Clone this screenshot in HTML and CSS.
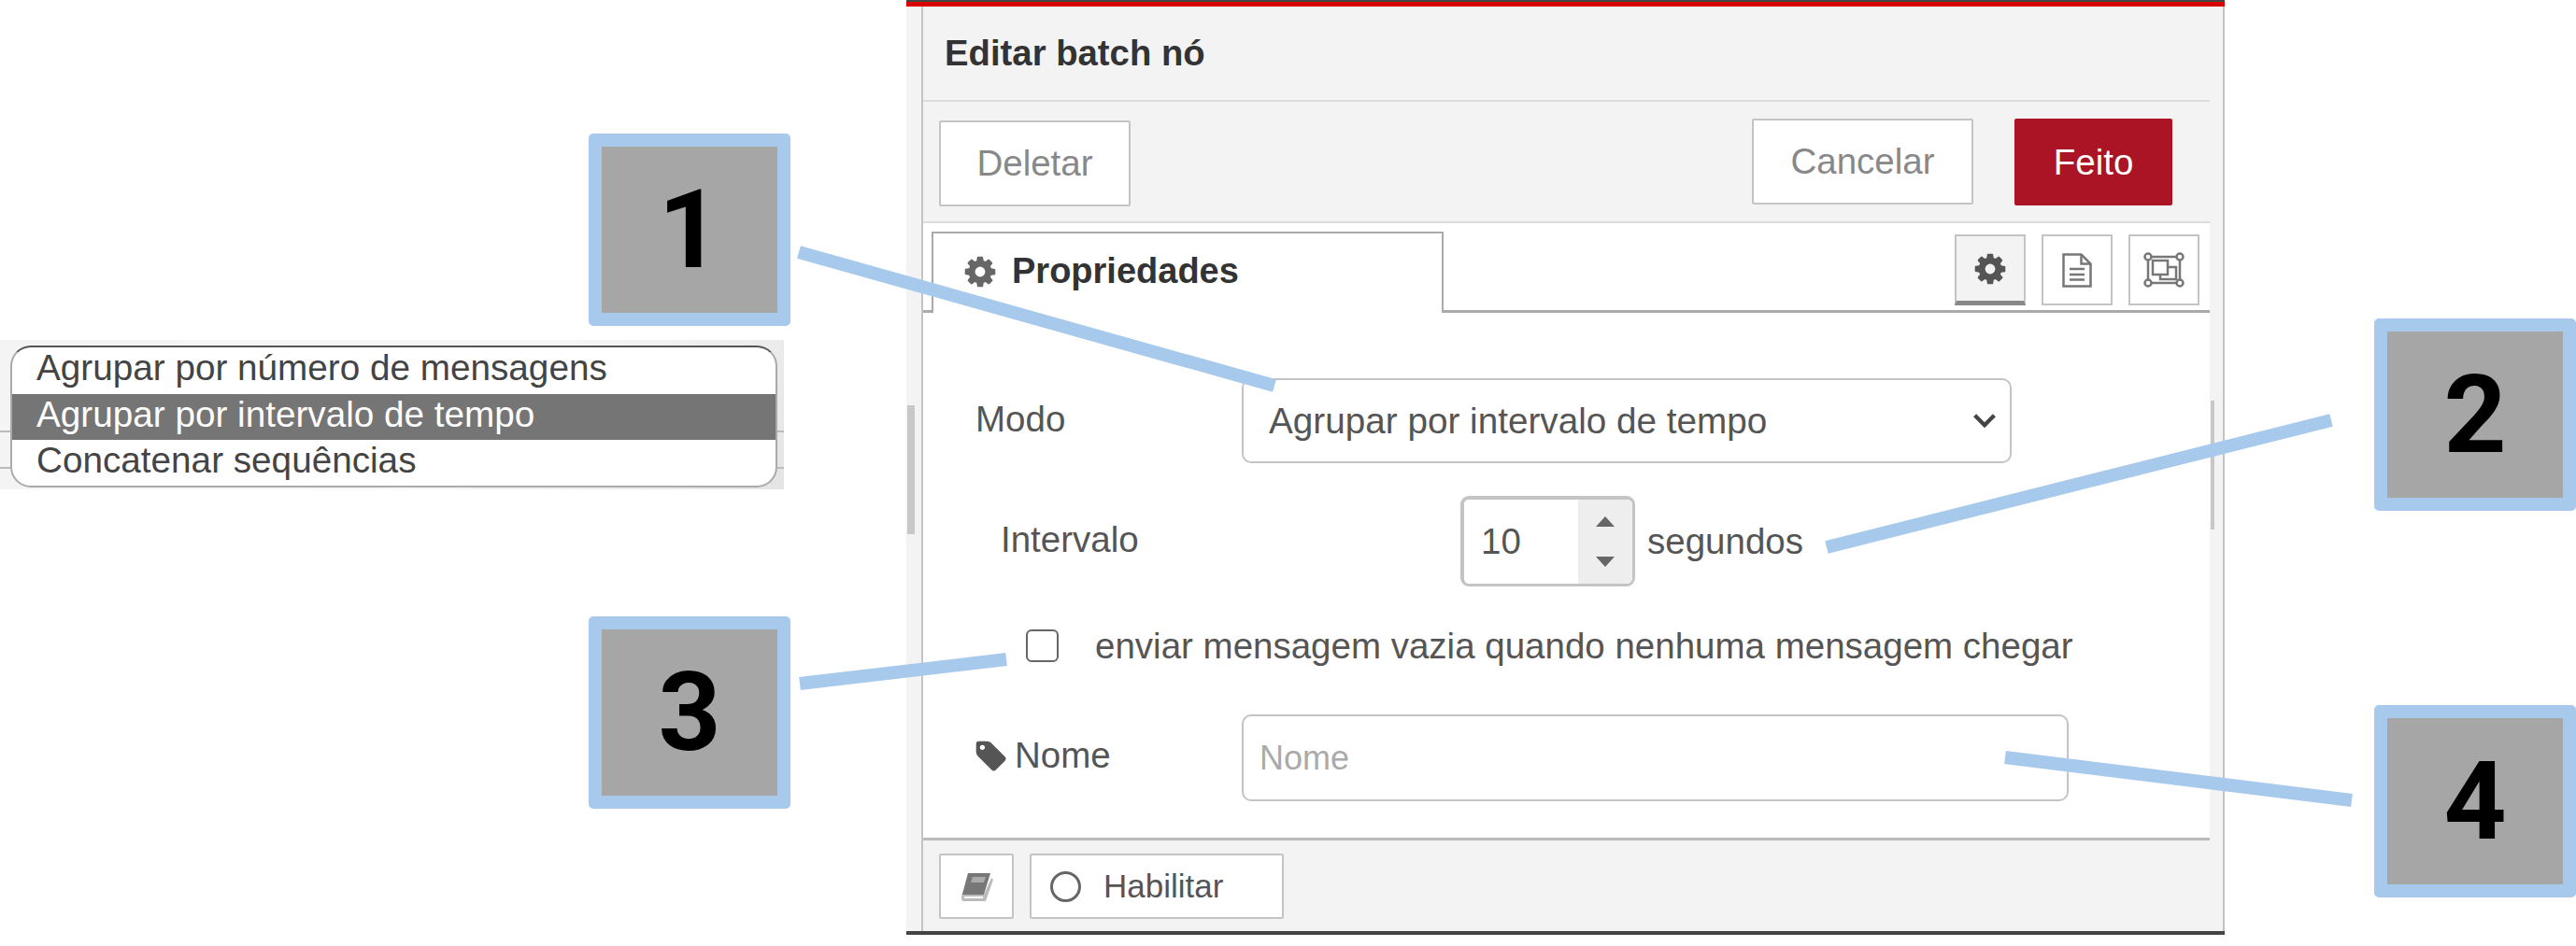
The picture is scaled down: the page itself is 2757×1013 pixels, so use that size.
FILE: index.html
```html
<!DOCTYPE html>
<html lang="pt-BR">
<head>
  <meta charset="UTF-8">
  <title>Editar batch nó</title>
  <link rel="stylesheet" href="styles.css">
</head>
<body>
  <div class="dropdown">
    <ul class="dropdown-list">
      <li>Agrupar por número de mensagens</li>
      <li class="selected">Agrupar por intervalo de tempo</li>
      <li>Concatenar sequências</li>
    </ul>
  </div>

  <div class="tray">
    <div class="gutter gutter-left"><span class="thumb"></span></div>
    <div class="tray-main">
      <div class="tray-header">Editar batch nó</div>
      <div class="tray-toolbar">
        <button class="btn btn-delete">Deletar</button>
        <button class="btn btn-cancel">Cancelar</button>
        <button class="btn btn-done">Feito</button>
      </div>
      <div class="tabs">
        <div class="tab">
          <svg class="tab-icon" viewBox="0 0 1792 1792"><path d="M1152 896q0-106-75-181t-181-75-181 75-75 181 75 181 181 75 181-75 75-181zm512-109v222q0 12-8 23t-20 13l-185 28q-19 54-39 91 35 50 107 138 10 12 10 25t-9 23q-27 37-99 108t-94 71q-12 0-26-9l-138-108q-44 23-91 38-16 136-29 186-7 28-36 28h-222q-14 0-24.500-8.500t-11.500-21.500l-28-184q-49-16-90-37l-141 107q-10 9-25 9-14 0-25-11-126-114-165-168-7-10-7-23 0-12 8-23 15-21 51-66.500t54-70.500q-27-50-41-99l-183-27q-13-2-21-12.500t-8-23.500v-222q0-12 8-23t19-13l186-28q14-46 39-92-40-57-107-138-10-12-10-24 0-10 9-23 26-36 98.500-107.500t94.500-71.500q13 0 26 10l138 107q44-23 91-38 16-136 29-186 7-28 36-28h222q14 0 24.500 8.500t11.500 21.500l28 184q49 16 90 37l142-107q9-9 24-9 13 0 25 10 129 119 165 170 7 8 7 22 0 12-8 23-15 21-51 66.500t-54 70.500q26 50 41 98l183 28q13 2 21 12.500t8 23.500z"/></svg>
          Propriedades
        </div>
        <div class="tab-buttons">
          <div class="tab-btn active">
            <svg class="gear" viewBox="0 0 1792 1792"><path d="M1152 896q0-106-75-181t-181-75-181 75-75 181 75 181 181 75 181-75 75-181zm512-109v222q0 12-8 23t-20 13l-185 28q-19 54-39 91 35 50 107 138 10 12 10 25t-9 23q-27 37-99 108t-94 71q-12 0-26-9l-138-108q-44 23-91 38-16 136-29 186-7 28-36 28h-222q-14 0-24.500-8.500t-11.500-21.500l-28-184q-49-16-90-37l-141 107q-10 9-25 9-14 0-25-11-126-114-165-168-7-10-7-23 0-12 8-23 15-21 51-66.500t54-70.500q-27-50-41-99l-183-27q-13-2-21-12.500t-8-23.500v-222q0-12 8-23t19-13l186-28q14-46 39-92-40-57-107-138-10-12-10-24 0-10 9-23 26-36 98.500-107.500t94.500-71.500q13 0 26 10l138 107q44-23 91-38 16-136 29-186 7-28 36-28h222q14 0 24.500 8.500t11.500 21.500l28 184q49 16 90 37l142-107q9-9 24-9 13 0 25 10 129 119 165 170 7 8 7 22 0 12-8 23-15 21-51 66.500t-54 70.500q26 50 41 98l183 28q13 2 21 12.500t8 23.500z"/></svg>
          </div>
          <div class="tab-btn">
            <svg class="file" viewBox="0 0 32 37" fill="none" stroke="#777" stroke-width="2.500"><path d="M1.500 1.500h19l10 10v24h-29z"/><path d="M20.500 1.500v10h10"/><path d="M8 17h16M8 23h16M8 28.500h16"/></svg>
          </div>
          <div class="tab-btn">
            <svg class="frame" viewBox="0 0 44 38" fill="none" stroke="#777" stroke-width="2.500"><path d="M5 5h34M5 33h34M5 5v28M39 5v28"/><circle cx="5" cy="5" r="3.500" fill="#fff"/><circle cx="39" cy="5" r="3.500" fill="#fff"/><circle cx="5" cy="33" r="3.500" fill="#fff"/><circle cx="39" cy="33" r="3.500" fill="#fff"/><path d="M18 16h17v13H18z"/><path d="M10 9h16v15H10z" fill="#fff"/></svg>
          </div>
        </div>
      </div>

      <form class="form">
        <div class="row row-mode">
          <label class="row-label">Modo</label>
          <div class="select-wrap">
            <select class="select">
              <option>Agrupar por intervalo de tempo</option>
            </select>
            <svg class="chevron" viewBox="0 0 30 20" fill="none" stroke="#444" stroke-width="5"><path d="M3 4l12 12 12-12"/></svg>
          </div>
        </div>
        <div class="row row-interval">
          <label class="row-label">Intervalo</label>
          <div class="spinner">
            <input class="spinner-input" type="text" value="10">
            <div class="spinner-arrows">
              <span class="arrow-up"></span>
              <span class="arrow-down"></span>
            </div>
          </div>
          <span class="unit">segundos</span>
        </div>
        <div class="row row-check">
          <input class="check" type="checkbox">
          <label>enviar mensagem vazia quando nenhuma mensagem chegar</label>
        </div>
        <div class="row row-name">
          <label class="row-label">
            <svg class="tag" viewBox="0 0 1664 1664"><path d="M576 448q0-53-37.500-90.500t-90.500-37.500-90.500 37.500-37.500 90.500 37.500 90.500 90.500 37.500 90.500-37.500 37.500-90.500zm1067 576q0 53-37 90l-491 492q-39 37-91 37-53 0-90-37l-715-716q-38-37-64.500-101t-26.500-117v-416q0-52 38-90t90-38h416q53 0 117 26.500t102 64.500l715 714q37 39 37 91z"/></svg>
            Nome
          </label>
          <input class="text-input" type="text" placeholder="Nome">
        </div>
      </form>

      <div class="tray-footer">
        <div class="btn foot-btn foot-book">
          <svg class="book" viewBox="0 0 35 31"><path d="M8 1h24l-7 23H5q-4 0-4 3z" fill="#777"/><path d="M13 5h14l-2 6H11z" fill="#aaa"/><path d="M1 27q0-3 4-3h20l8-18 2 2-8 23H3q-2 0-2-4z" fill="#bbb"/><path d="M4 26h20v2H4z" fill="#fff"/></svg>
        </div>
        <div class="btn foot-btn foot-enable">
          <span class="ring"></span>
          Habilitar
        </div>
      </div>
    </div>
    <div class="gutter gutter-right"><span class="thumb"></span></div>
  </div>

  <svg class="leaders" viewBox="0 0 2757 1013">
    <line x1="855" y1="270" x2="1364" y2="413"/>
    <line x1="2495" y1="450" x2="1955" y2="586"/>
    <line x1="856" y1="732" x2="1077" y2="706"/>
    <line x1="2146" y1="811" x2="2517" y2="857"/>
  </svg>

  <div class="badge badge-1">1</div>
  <div class="badge badge-2">2</div>
  <div class="badge badge-3">3</div>
  <div class="badge badge-4">4</div>
</body>
</html>
```

FILE: styles.css
```css
:root {
  --panel-bg: #f3f3f3;
  --line: #c4c4c4;
  --line-light: #dcdcdc;
  --text: #555;
  --callout: #a6c9ec;
}

* {
  box-sizing: border-box;
}

body {
  margin: 0;
  height: 1013px;
  overflow: hidden;
  background-color: #fff;
  color: var(--text);
  font-family: "Liberation Sans", Arial, sans-serif;
  font-size: 38.500px;
}

/* option list cut out on the left */
.dropdown {
  position: absolute;
  left: 0;
  top: 364px;
  width: 839px;
  height: 160px;
  padding: 6px 7px 2px 11px;
  background:
    linear-gradient(#bbb, #bbb) 0 97px / 11px 2px no-repeat,
    linear-gradient(#bbb, #bbb) 0 136px / 11px 2px no-repeat,
    linear-gradient(#bbb, #bbb) 100% 97px / 7px 2px no-repeat,
    linear-gradient(#bbb, #bbb) 100% 136px / 7px 2px no-repeat,
    linear-gradient(135deg, #f4f4f4, #f6f6f6 60%, #e4e4e4);
}

.dropdown-list {
  list-style: none;
  margin: 0;
  padding: 0;
  height: 152px;
  background-color: #fff;
  border: 2px solid #aaa;
  border-top-color: #555;
  border-radius: 22px;
  overflow: hidden;
  font-size: 38.700px;
  color: #444;
}

.dropdown-list li {
  height: 49px;
  line-height: 43px;
  padding-left: 26px;
}

.dropdown-list li:first-child {
  height: 50px;
}

.dropdown-list .selected {
  background-color: #757575;
  color: #fff;
}

/* edit tray */
.tray {
  position: absolute;
  left: 970px;
  top: 0;
  width: 1411px;
  height: 1001px;
  display: flex;
  background-color: var(--panel-bg);
  border-top: 7px solid #d80000;
  border-bottom: 4px solid #444;
}

.tray::before {
  content: "";
  position: absolute;
  left: 0;
  right: 0;
  top: -7px;
  height: 2px;
  background-color: #444;
}

.gutter {
  position: relative;
  flex: none;
}

.gutter-left {
  width: 18px;
  border-right: 2px solid var(--line);
}

.gutter-right {
  width: 16px;
  border-right: 2px solid var(--line);
}

.thumb {
  position: absolute;
  background-color: #c8c8c8;
}

.gutter-left .thumb {
  left: 1px;
  top: 427px;
  width: 8px;
  height: 138px;
}

.gutter-right .thumb {
  left: 1px;
  top: 422px;
  width: 4px;
  height: 138px;
}

.tray-main {
  flex: 1;
  display: flex;
  flex-direction: column;
}

.tray-header {
  height: 102px;
  display: flex;
  align-items: center;
  padding-left: 23px;
  font-size: 38.300px;
  font-weight: bold;
  color: #333;
  border-bottom: 2px solid var(--line-light);
}

.tray-toolbar {
  height: 130px;
  display: flex;
  padding: 18px 40px 0 17px;
  border-bottom: 2px solid var(--line-light);
}

.btn {
  font-family: inherit;
  font-size: 38.500px;
  color: #888;
  background-color: #fff;
  border: 2px solid var(--line);
  border-radius: 2px;
}

.btn-delete {
  width: 205px;
  height: 92px;
  margin-top: 2px;
  margin-right: auto;
}

.btn-cancel {
  width: 237px;
  height: 92px;
  margin-right: 44px;
}

.btn-done {
  width: 169px;
  height: 93px;
  background-color: #aa1424;
  border-color: #aa1424;
  color: #fff;
}

.tabs {
  height: 96px;
  display: flex;
  background-color: #fff;
  padding-left: 9px;
  border-bottom: 3px solid #aaa;
}

.tab {
  width: 548px;
  height: 87px;
  margin-top: 9px;
  display: flex;
  align-items: center;
  gap: 15px;
  padding: 0 0 4px 31px;
  background-color: #fff;
  border: 2px solid #aaa;
  border-bottom: none;
  font-size: 38px;
  font-weight: bold;
  color: #333;
}

.tab-icon {
  width: 38px;
  height: 38px;
  fill: #666;
}

.tab-buttons {
  margin-left: auto;
  display: flex;
  gap: 17px;
  padding: 12px 11px 0 0;
}

.tab-btn {
  width: 76px;
  height: 76px;
  display: flex;
  align-items: center;
  justify-content: center;
  background-color: #fff;
  border: 2px solid var(--line);
}

.tab-btn.active {
  background-color: var(--panel-bg);
  border-bottom: 5px solid #888;
}

.gear {
  width: 38px;
  height: 38px;
  fill: #555;
}

.file {
  width: 32px;
  height: 37px;
}

.frame {
  width: 44px;
  height: 38px;
}

.form {
  flex: 1;
  background-color: #fff;
  padding: 70px 0 0 56px;
}

.row {
  display: flex;
  align-items: center;
}

.row-label {
  width: 285px;
  display: flex;
  align-items: center;
}

.row-mode .row-label,
.row-interval .row-label {
  margin-top: -3px;
}

.select-wrap {
  position: relative;
  width: 824px;
  height: 91px;
}

.select {
  appearance: none;
  width: 100%;
  height: 100%;
  padding: 0 0 0 27px;
  font-family: inherit;
  font-size: 38.700px;
  color: var(--text);
  background-color: #fff;
  border: 2px solid var(--line);
  border-radius: 10px;
}

.chevron {
  position: absolute;
  right: 16px;
  top: 36px;
  width: 26px;
  height: 18px;
}

.row-interval {
  margin-top: 35px;
  padding-left: 27px;
}

.row-interval .row-label {
  width: 492px;
}

.spinner {
  width: 187px;
  height: 97px;
  display: flex;
  border: 3px solid var(--line);
  border-top-width: 4px;
  border-left-width: 4px;
  border-radius: 9px;
  overflow: hidden;
}

.spinner-input {
  width: 122px;
  padding: 0 0 0 18px;
  border: none;
  outline: none;
  font-family: inherit;
  font-size: 38.500px;
  color: var(--text);
}

.spinner-arrows {
  flex: 1;
  display: flex;
  flex-direction: column;
  align-items: center;
  justify-content: center;
  gap: 32px;
  background-color: #eee;
}

.arrow-up,
.arrow-down {
  width: 0;
  height: 0;
  border-left: 10px solid transparent;
  border-right: 10px solid transparent;
}

.arrow-up {
  border-bottom: 11px solid #666;
}

.arrow-down {
  border-top: 11px solid #666;
}

.unit {
  margin-left: 13px;
}

.row-check {
  margin-top: 46px;
  padding-left: 54px;
  height: 35px;
  gap: 39px;
}

.check {
  appearance: none;
  flex: none;
  width: 35px;
  height: 35px;
  margin: 0;
  background-color: #fff;
  border: 2px solid #666;
  border-radius: 6px;
}

.row-name {
  margin-top: 56px;
}

.row-name .row-label {
  gap: 9px;
  margin-top: -6px;
  margin-left: -2px;
  margin-right: 2px;
}

.tag {
  width: 35px;
  height: 35px;
  fill: #555;
}

.text-input {
  width: 885px;
  height: 93px;
  padding: 0 0 0 17px;
  font-family: inherit;
  font-size: 36px;
  color: var(--text);
  background-color: #fff;
  border: 2px solid var(--line);
  border-radius: 10px;
}

.text-input::placeholder {
  color: #aaa;
}

.tray-footer {
  height: 100px;
  display: flex;
  gap: 17px;
  padding: 14px 0 0 17px;
  border-top: 3px solid #bbb;
}

.foot-btn {
  height: 70px;
  display: flex;
  align-items: center;
}

.foot-book {
  width: 80px;
  justify-content: center;
}

.book {
  width: 35px;
  height: 31px;
}

.foot-enable {
  width: 272px;
  padding-left: 20px;
  gap: 24px;
  font-size: 35px;
  color: #555;
}

.ring {
  width: 33px;
  height: 33px;
  border: 3px solid #666;
  border-radius: 50%;
}

/* numbered callouts over the screenshot */
.leaders {
  position: absolute;
  left: 0;
  top: 0;
  width: 2757px;
  height: 1013px;
}

.leaders line {
  stroke: var(--callout);
  stroke-width: 14;
}

.badge {
  position: absolute;
  width: 216px;
  height: 206px;
  display: flex;
  align-items: center;
  justify-content: center;
  background-color: #a6a6a6;
  border: 14px solid var(--callout);
  border-radius: 5px;
  color: #000;
  font-family: Roboto, "Liberation Sans", sans-serif;
  font-size: 117px;
  font-weight: bold;
}

.badge-1 {
  left: 630px;
  top: 143px;
}

.badge-2 {
  left: 2541px;
  top: 341px;
}

.badge-3 {
  left: 630px;
  top: 660px;
}

.badge-4 {
  left: 2541px;
  top: 755px;
}
```
